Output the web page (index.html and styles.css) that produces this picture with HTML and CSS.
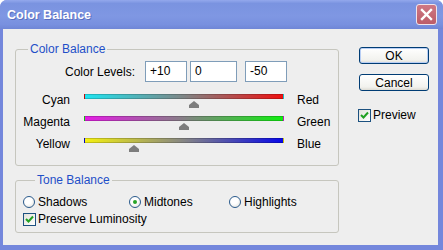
FILE: index.html
```html
<!DOCTYPE html>
<html>
<head>
<meta charset="utf-8">
<link rel="stylesheet" href="styles.css">
</head>
<body>
<div class="window">
  <div class="titlebar">
    <span class="title">Color Balance</span>
    <span class="close"><svg width="13" height="13" viewBox="0 0 13 13"><path d="M2 2 L11 11 M11 2 L2 11" stroke="#fff" stroke-width="2.4" stroke-linecap="square"/></svg></span>
  </div>
  <div class="client">
    <div class="groups">
      <fieldset class="group g1">
        <legend>Color Balance</legend>
        <div class="levels">
          <span class="levels-label">Color Levels:</span>
          <div class="field w42">+10</div>
          <div class="field w47 gap3">0</div>
          <div class="field w42 gap8">-50</div>
        </div>
        <div class="sliders">
          <span class="lbl-l">Cyan</span>
          <div class="track cyan-red"><div class="bar"></div><svg class="thumb" style="left:105px" width="10" height="7" viewBox="0 0 10 7"><path d="M5 0 L10 4 L10 7 L0 7 L0 4 Z" fill="#7d7d7d"/></svg></div>
          <span class="lbl-r">Red</span>
          <span class="lbl-l">Magenta</span>
          <div class="track magenta-green"><div class="bar"></div><svg class="thumb" style="left:95px" width="10" height="7" viewBox="0 0 10 7"><path d="M5 0 L10 4 L10 7 L0 7 L0 4 Z" fill="#7d7d7d"/></svg></div>
          <span class="lbl-r">Green</span>
          <span class="lbl-l">Yellow</span>
          <div class="track yellow-blue"><div class="bar"></div><svg class="thumb" style="left:45px" width="10" height="7" viewBox="0 0 10 7"><path d="M5 0 L10 4 L10 7 L0 7 L0 4 Z" fill="#7d7d7d"/></svg></div>
          <span class="lbl-r">Blue</span>
        </div>
      </fieldset>
      <fieldset class="group g2">
        <legend>Tone Balance</legend>
        <div class="radios">
          <label class="opt"><span class="radio"></span>Shadows</label>
          <label class="opt"><span class="radio on"></span>Midtones</label>
          <label class="opt"><span class="radio"></span>Highlights</label>
        </div>
        <label class="opt check-row"><span class="checkbox"><svg width="11" height="11" viewBox="0 0 11 11"><path d="M2 5 L4.5 7.5 L9 2.5" fill="none" stroke="#21a121" stroke-width="2"/></svg></span>Preserve Luminosity</label>
      </fieldset>
    </div>
    <div class="side">
      <div class="btn default">OK</div>
      <div class="btn">Cancel</div>
      <label class="opt preview"><span class="checkbox"><svg width="11" height="11" viewBox="0 0 11 11"><path d="M2 5 L4.5 7.5 L9 2.5" fill="none" stroke="#21a121" stroke-width="2"/></svg></span>Preview</label>
    </div>
  </div>
</div>
</body>
</html>
```

FILE: styles.css
```css
html, body {
  margin: 0;
  padding: 0;
  background: #fff;
}
body {
  font-family: "Liberation Sans", Arial, sans-serif;
  font-size: 12px;
  color: #000;
}
.window {
  width: 443px;
  height: 250px;
  background: #7487dc;
  display: flex;
  flex-direction: column;
  border-radius: 7px 7px 0 0;
  overflow: hidden;
}
.titlebar {
  height: 29px;
  flex: none;
  display: flex;
  align-items: center;
  justify-content: space-between;
  padding: 0 6px 0 7px;
  background: linear-gradient(to bottom, #93a8ec 0%, #7a93e0 12%, #7f97e3 55%, #7890df 85%, #6f86d6 100%);
}
.title {
  color: #fff;
  font-weight: bold;
  font-size: 12.5px;
  text-shadow: 1px 1px 0 #5a6fc0;
  margin-top: 1px;
}
.close {
  width: 19px;
  height: 19px;
  border: 1px solid #f0e4ea;
  border-radius: 3px;
  background: linear-gradient(to bottom, #cf7884, #bc5c68);
  display: flex;
  align-items: center;
  justify-content: center;
}
.client {
  flex: 1;
  margin: 0 5px 5px 3px;
  background: #eeeeee;
  display: flex;
}
.groups {
  padding-left: 12px;
  display: flex;
  flex-direction: column;
}
.group {
  box-sizing: border-box;
  width: 324px;
  margin: 0;
  border: 1px solid #c6c6be;
  border-radius: 3px;
  min-inline-size: auto;
}
.group legend {
  margin-left: 12px;
  padding: 0 2px;
  line-height: 14px;
  color: #1e4fc8;
}
.g1 {
  margin-top: 13px;
  padding: 5px 0 7px 0;
}
.g2 {
  margin-top: 7px;
  padding: 7px 0 5px 7px;
}
.levels {
  display: flex;
  align-items: center;
  height: 21px;
}
.levels-label {
  width: 119px;
  text-align: right;
  margin-right: 10px;
}
.field {
  box-sizing: border-box;
  height: 21px;
  line-height: 19px;
  border: 1px solid #7f9db9;
  background: #fff;
  padding-left: 4px;
}
.w42 { width: 42px; }
.w47 { width: 47px; }
.gap3 { margin-left: 3px; }
.gap8 { margin-left: 8px; }
.sliders {
  margin-top: 10px;
  display: grid;
  grid-template-columns: 54px 200px auto;
  grid-auto-rows: 22px;
  column-gap: 14px;
}
.lbl-l {
  text-align: right;
  line-height: 14px;
  padding-top: 1px;
}
.lbl-r {
  margin-left: -1px;
  line-height: 14px;
  padding-top: 1px;
}
.track {
  position: relative;
  padding-top: 2px;
}
.bar {
  box-sizing: border-box;
  height: 5px;
  border: 1px solid rgba(0,0,0,0.18);
}
.cyan-red .bar { background: linear-gradient(to right, #1ee4f0, #7f8585 50%, #ee1010); }
.magenta-green .bar { background: linear-gradient(to right, #e41ce4, #858085 50%, #10ee10); }
.yellow-blue .bar { background: linear-gradient(to right, #f4f010, #858585 50%, #0808e8); }
.thumb {
  position: absolute;
  top: 9px;
}
.opt {
  display: flex;
  align-items: center;
  height: 16px;
  white-space: nowrap;
}
.radios {
  display: grid;
  grid-template-columns: 106px 100px auto;
}
.radio {
  box-sizing: border-box;
  width: 12px;
  height: 12px;
  border-radius: 50%;
  border: 1px solid #2a5a8c;
  background: radial-gradient(circle at 40% 35%, #ffffff 40%, #dcdcd4);
  margin-right: 3px;
  display: flex;
  align-items: center;
  justify-content: center;
}
.radio.on::after {
  content: "";
  width: 4px;
  height: 4px;
  border-radius: 50%;
  background: #28a428;
}
.check-row {
  margin-top: 1px;
}
.checkbox {
  box-sizing: border-box;
  width: 13px;
  height: 13px;
  border: 1px solid #1c5180;
  background: linear-gradient(135deg, #e2e2da, #ffffff);
  margin-right: 2px;
  display: flex;
  align-items: center;
  justify-content: center;
}
.side {
  display: flex;
  flex-direction: column;
  padding-left: 20px;
  padding-top: 18px;
}
.btn {
  box-sizing: border-box;
  width: 70px;
  height: 17px;
  border: 1px solid #003c74;
  border-radius: 3px;
  background: linear-gradient(to bottom, #ffffff, #f2f2ee 80%, #dedcd4);
  display: flex;
  align-items: center;
  justify-content: center;
}
.btn.default {
  box-shadow: inset 0 0 0 1px #b8cef4;
}
.btn + .btn {
  margin-top: 10px;
}
.preview {
  margin-top: 16px;
  margin-left: -1px;
}
```
